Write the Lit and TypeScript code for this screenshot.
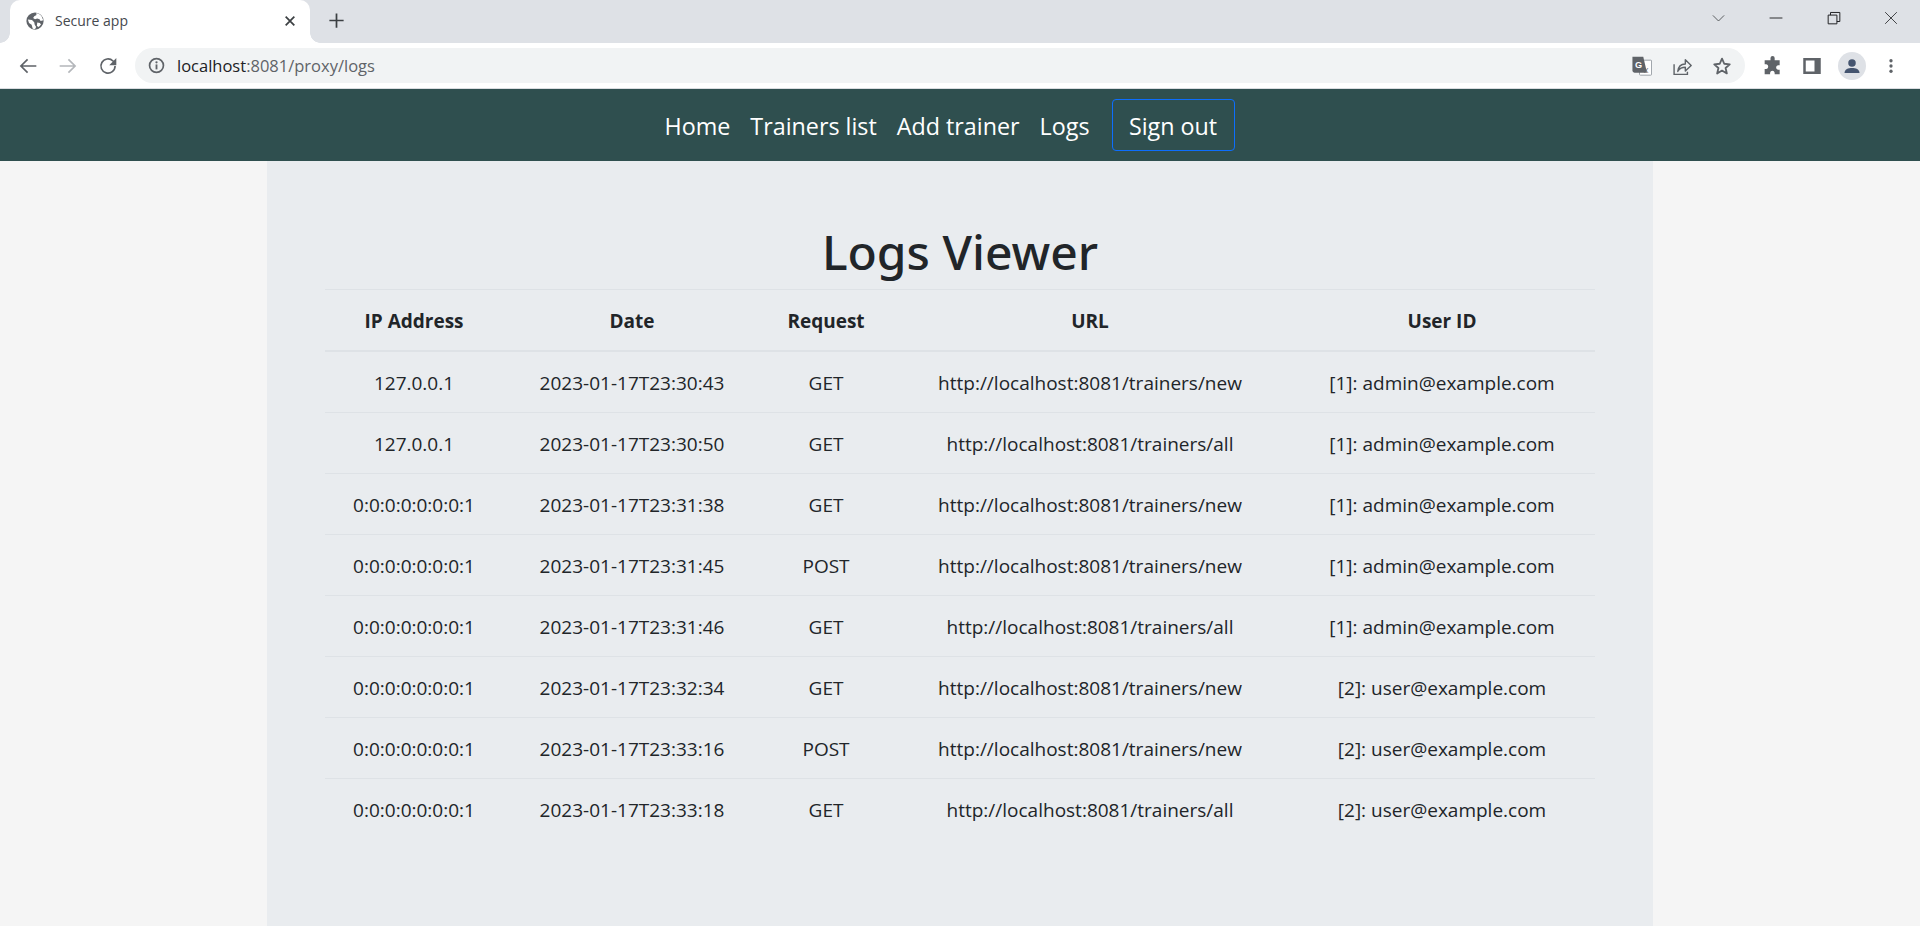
import { LitElement, html, css, svg } from "lit";
import { customElement } from "lit/decorators.js";

const rows = [
  ["127.0.0.1", "2023-01-17T23:30:43", "GET", "http://localhost:8081/trainers/new", "[1]: admin@example.com"],
  ["127.0.0.1", "2023-01-17T23:30:50", "GET", "http://localhost:8081/trainers/all", "[1]: admin@example.com"],
  ["0:0:0:0:0:0:0:1", "2023-01-17T23:31:38", "GET", "http://localhost:8081/trainers/new", "[1]: admin@example.com"],
  ["0:0:0:0:0:0:0:1", "2023-01-17T23:31:45", "POST", "http://localhost:8081/trainers/new", "[1]: admin@example.com"],
  ["0:0:0:0:0:0:0:1", "2023-01-17T23:31:46", "GET", "http://localhost:8081/trainers/all", "[1]: admin@example.com"],
  ["0:0:0:0:0:0:0:1", "2023-01-17T23:32:34", "GET", "http://localhost:8081/trainers/new", "[2]: user@example.com"],
  ["0:0:0:0:0:0:0:1", "2023-01-17T23:33:16", "POST", "http://localhost:8081/trainers/new", "[2]: user@example.com"],
  ["0:0:0:0:0:0:0:1", "2023-01-17T23:33:18", "GET", "http://localhost:8081/trainers/all", "[2]: user@example.com"],
];
const heads = ["IP Address", "Date", "Request", "URL", "User ID"];

const ic = (w: number, body: unknown) =>
  html`<svg width=${w} height=${w} viewBox="0 0 24 24" fill="none">${body}</svg>`;

const globe = svg`<circle cx="12" cy="12" r="11.500" fill="#5f6368"/><path d="M2.500 10l5.500 .5 3 3 .5 3 2 3.500-1.500 3-3-.8-1.500-5.200-3.500-2.500zM13.500 1.500l.5 2.500-3 1.500-1.500 2.500 2.500 1.500 3-1 3 1 1.500 2.500 3.500-1-2.500-6-4-3zM15 14l3.500 .5 1.500 2-3 3.500-2.500-1.500z" fill="#fff"/>`;
const close = svg`<path d="M5.500 5.500l13 13M18.500 5.500l-13 13" stroke="#3c4043" stroke-width="2.600"/>`;
const plus = svg`<path d="M12 3v18M3 12h18" stroke="#3c4043" stroke-width="2.200"/>`;
const arrow = (c: string, flip: boolean) =>
  svg`<g transform=${flip ? "rotate(180 12 12)" : ""}><path d="M22 12H3.500M11.500 4L3.500 12l8 8" stroke=${c} stroke-width="2"/></g>`;
const reload = svg`<path d="M20.500 12a8.500 8.500 0 1 1-2.500-6L21 9" stroke="#5f6368" stroke-width="2"/><path d="M22 2.500v8.500h-8.500z" fill="#5f6368"/>`;
const info = svg`<circle cx="12" cy="12" r="9.800" stroke="#5f6368" stroke-width="2.400"/><path d="M12 10.500v7" stroke="#5f6368" stroke-width="2.600"/><circle cx="12" cy="7.500" r="1.600" fill="#5f6368"/>`;
const translate = svg`<rect x="9" y="5" width="14.500" height="18" rx="1" fill="#fff" stroke="#9aa0a6" stroke-width="1.200"/><path d="M0.500 1h13l4.500 19H3a2.500 2.500 0 0 1-2.500-2.500z" fill="#5f6368"/><text x="3.500" y="14.500" font-size="11" font-weight="700" fill="#fff" font-family="Liberation Sans, sans-serif">G</text><text x="14" y="20.500" font-size="8.500" fill="#5f6368" font-family="Liberation Sans, sans-serif">X</text>`;
const share = svg`<path d="M2.500 10v12h16v-3" stroke="#5f6368" stroke-width="1.700"/><path d="M7 18.500c.5-5.500 4-9 9-9V4.500l7 7-7 6.500v-4.500c-4 0-7 1.500-9 4.500z" stroke="#5f6368" stroke-width="1.700" stroke-linejoin="round"/>`;
const star = svg`<path d="M12 3.200l2.700 6.100 6.600.7-5 4.400 1.500 6.500-5.800-3.400-5.800 3.400 1.500-6.500-5-4.400 6.600-.7z" stroke="#5f6368" stroke-width="2.200" stroke-linejoin="round"/>`;
const puzzle = svg`<path d="M9 2.500a2.500 2.500 0 0 1 5 0V5h6v6h-2a2.800 2.800 0 0 0 0 5.500h2V22h-6v-2a2.800 2.800 0 0 0-5.500 0v2H2v-6.500h2a2.800 2.800 0 0 0 0-5.500H2V5h7z" fill="#5f6368"/>`;
const panel = svg`<path fill-rule="evenodd" d="M1.500 2.500h21v19h-21zM4.500 5.500v13H15v-13z" fill="#5f6368"/>`;
const person = svg`<circle cx="12" cy="8.500" r="4.500" fill="#44546f"/><path d="M3 20.500c0-4.500 4.500-6 9-6s9 1.500 9 6z" fill="#44546f"/>`;
const dots = svg`<circle cx="12" cy="5" r="2.200" fill="#5f6368"/><circle cx="12" cy="12" r="2.200" fill="#5f6368"/><circle cx="12" cy="19" r="2.200" fill="#5f6368"/>`;
const chev = svg`<path d="M3 7l9 9 9-9" stroke="#3c4043" stroke-width="1.300"/>`;
const minim = svg`<path d="M1 12h22" stroke="#202124" stroke-width="1.600"/>`;
const restore = svg`<path d="M2 7h15v15H2zM6 7V2.500h16V18h-5" stroke="#202124" stroke-width="1.700"/>`;
const winx = svg`<path d="M2 2l20 20M22 2L2 22" stroke="#202124" stroke-width="1.400"/>`;

@customElement("app-root")
export class AppRoot extends LitElement {
  static styles = css`
    :host {
      display: block;
      height: 926px;
      overflow: hidden;
      background: #f5f5f5;
      font-family: "Open Sans", "Noto Sans", sans-serif;
      color: #212529;
    }
    svg { display: block; flex: none; }
    .strip {
      height: 43px;
      background: #dee1e6;
      display: flex;
      padding-left: 10px;
    }
    .tab {
      position: relative;
      width: 300px;
      background: #fff;
      border-radius: 10px 10px 0 0;
      display: flex;
      align-items: center;
      padding: 0 12px 2px 16px;
      box-sizing: border-box;
    }
    .tab::before, .tab::after {
      content: "";
      position: absolute;
      bottom: 0;
      width: 10px;
      height: 10px;
      background: radial-gradient(circle at 0 0, #dee1e6 9.500px, #fff 10px);
    }
    .tab::before { left: -10px; }
    .tab::after {
      right: -10px;
      background: radial-gradient(circle at 100% 0, #dee1e6 9.500px, #fff 10px);
    }
    .tab-title {
      margin-left: 11px;
      flex: 1;
      font-size: 14px;
      color: #45494e;
    }
    .new-tab { margin: 0 0 2px 17px; align-self: center; }
    .win {
      margin-left: auto;
      display: flex;
      align-items: center;
      padding-bottom: 7px;
    }
    .win div { width: 57.500px; display: flex; justify-content: center; }
    .toolbar {
      height: 45px;
      background: #fff;
      display: flex;
      align-items: center;
      border-bottom: 1px solid #dadce0;
    }
    .navbtn { width: 40px; display: flex; justify-content: center; }
    .navbtn:first-child { margin-left: 8px; }
    .omni {
      margin-left: 7px;
      width: 1610px;
      height: 35px;
      border-radius: 18px;
      background: #f1f3f4;
      display: flex;
      align-items: center;
      padding-left: 13px;
      box-sizing: border-box;
    }
    .url {
      margin-left: 12px;
      font-size: 16.500px;
      color: #5f6368;
      flex: 1;
      white-space: nowrap;
    }
    .url b { font-weight: 400; color: #202124; }
    .omni-ic { width: 40px; display: flex; justify-content: center; }
    .omni-ic:last-child { margin-right: 3px; }
    .tools { display: flex; align-items: center; margin-left: 8px; }
    .tool { width: 39.500px; display: flex; justify-content: center; }
    .avatar {
      width: 28px;
      height: 28px;
      border-radius: 50%;
      background: #dee1e6;
      display: flex;
      align-items: center;
      justify-content: center;
    }
    nav {
      height: 72px;
      background: #2f4f4f;
      display: flex;
      align-items: center;
      justify-content: center;
      padding-right: 31px;
    }
    nav a {
      color: #fff;
      font-size: 23.300px;
      padding: 2px 10px 0;
      white-space: nowrap;
    }
    .signout {
      margin-left: 12px;
      height: 52px;
      width: 123px;
      padding-top: 2px;
      box-sizing: border-box;
      border: 1px solid #0d6efd;
      border-radius: 4px;
      display: flex;
      align-items: center;
      justify-content: center;
      color: #fff;
      font-size: 23.300px;
    }
    main {
      width: 1386px;
      height: 765px;
      margin: 0 auto;
      background: #e9ecef;
      padding: 53px 58px 0;
      box-sizing: border-box;
    }
    h1 {
      margin: 0;
      height: 75px;
      line-height: 75px;
      text-align: center;
      font-family: "Noto Sans", sans-serif;
      font-size: 48px;
      font-weight: 500;
    }
    table {
      width: 1270px;
      border-collapse: collapse;
      table-layout: fixed;
      font-size: 19px;
    }
    th, td {
      text-align: center;
      border-top: 1px solid #dee2e6;
      padding: 2px 0 0;
      height: 58px;
      white-space: nowrap;
    }
    th { font-weight: 700; }
    tbody tr:first-child td { border-top: 2px solid #dee2e6; }
    td { color: #212529; }
    .c1 { width: 178px; } .c2 { width: 258px; } .c3 { width: 130px; } .c4 { width: 398px; } .c5 { width: 306px; }
  `;

  render() {
    return html`
      <div class="strip">
        <div class="tab">
          ${ic(18, globe)}
          <span class="tab-title">Secure app</span>
          ${ic(16, close)}
        </div>
        <div class="new-tab">${ic(19, plus)}</div>
        <div class="win">
          <div>${ic(15, chev)}</div>
          <div>${ic(14, minim)}</div>
          <div>${ic(14, restore)}</div>
          <div>${ic(14, winx)}</div>
        </div>
      </div>
      <div class="toolbar">
        <div class="navbtn">${ic(20, arrow("#5f6368", false))}</div>
        <div class="navbtn">${ic(20, arrow("#b4b7bb", true))}</div>
        <div class="navbtn">${ic(20, reload)}</div>
        <div class="omni">
          ${ic(17, info)}
          <span class="url"><b>localhost</b>:8081/proxy/logs</span>
          <div class="omni-ic">${ic(20, translate)}</div>
          <div class="omni-ic">${ic(20, share)}</div>
          <div class="omni-ic">${ic(20, star)}</div>
        </div>
        <div class="tools">
          <div class="tool">${ic(20, puzzle)}</div>
          <div class="tool">${ic(20, panel)}</div>
          <div class="tool"><div class="avatar">${ic(20, person)}</div></div>
          <div class="tool">${ic(18, dots)}</div>
        </div>
      </div>
      <nav>
        <a>Home</a><a>Trainers list</a><a>Add trainer</a><a>Logs</a>
        <div class="signout">Sign out</div>
      </nav>
      <main>
        <h1>Logs Viewer</h1>
        <table>
          <colgroup>
            <col class="c1" /><col class="c2" /><col class="c3" /><col class="c4" /><col class="c5" />
          </colgroup>
          <thead>
            <tr>${heads.map((h) => html`<th>${h}</th>`)}</tr>
          </thead>
          <tbody>
            ${rows.map((r) => html`<tr>${r.map((c) => html`<td>${c}</td>`)}</tr>`)}
          </tbody>
        </table>
      </main>
    `;
  }
}
